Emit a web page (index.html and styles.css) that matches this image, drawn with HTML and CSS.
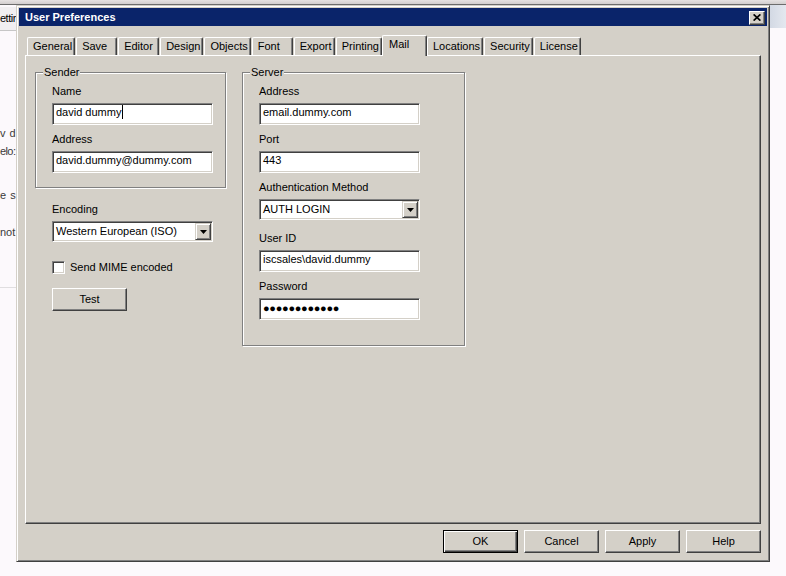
FILE: index.html
```html
<!DOCTYPE html>
<html>
<head>
<meta charset="utf-8">
<title>User Preferences</title>
<link rel="stylesheet" href="styles.css">
</head>
<body>
<div class="desk">
  <div class="topstrip"></div>
  <div class="desk-row">
    <div class="side-left">
      <div class="side-tab">ettir</div>
      <div class="side-line first">v d</div>
      <div class="side-line tight">elo:</div>
      <div class="side-line gap1">e s</div>
      <div class="side-line gap2">not</div>
      <div class="side-rule"></div>
    </div>
    <div class="side-right">
      <div class="pale"></div>
    </div>
  </div>
</div>

<div class="dialog">
  <div class="titlebar">
    <span class="title">User Preferences</span>
    <span class="close"><svg width="8" height="7" viewBox="0 0 8 7"><path d="M0.6 0.4L7.4 6.6M7.4 0.4L0.6 6.6" stroke="#000" stroke-width="1.7" fill="none"/></svg></span>
  </div>
  <div class="dlg-body">
    <div class="tabs">
      <div class="tab">General</div>
      <div class="tab">Save</div>
      <div class="tab">Editor</div>
      <div class="tab">Design</div>
      <div class="tab">Objects</div>
      <div class="tab">Font</div>
      <div class="tab">Export</div>
      <div class="tab">Printing</div>
      <div class="tab active">Mail</div>
      <div class="tab">Locations</div>
      <div class="tab">Security</div>
      <div class="tab">License</div>
    </div>
    <div class="panel">
      <div class="leftcol">
        <div class="group sender">
          <div class="group-title">Sender</div>
          <div class="field">
            <div class="lbl">Name</div>
            <div class="textbox">david dummy<span class="caret"></span></div>
          </div>
          <div class="field">
            <div class="lbl">Address</div>
            <div class="textbox">david.dummy@dummy.com</div>
          </div>
        </div>
        <div class="below">
          <div class="field">
            <div class="lbl">Encoding</div>
            <div class="combo">
              <span class="combo-text">Western European (ISO)</span>
              <span class="drop"><svg width="7" height="4" viewBox="0 0 7 4"><path d="M0 0H7L3.5 4Z" fill="#000"/></svg></span>
            </div>
          </div>
          <div class="checkrow"><span class="check"></span><span>Send MIME encoded</span></div>
          <div class="btn test">Test</div>
        </div>
      </div>
      <div class="group server">
        <div class="group-title">Server</div>
        <div class="field">
          <div class="lbl">Address</div>
          <div class="textbox">email.dummy.com</div>
        </div>
        <div class="field">
          <div class="lbl">Port</div>
          <div class="textbox">443</div>
        </div>
        <div class="field field-combo">
          <div class="lbl">Authentication Method</div>
          <div class="combo">
            <span class="combo-text">AUTH LOGIN</span>
            <span class="drop"><svg width="7" height="4" viewBox="0 0 7 4"><path d="M0 0H7L3.5 4Z" fill="#000"/></svg></span>
          </div>
        </div>
        <div class="field">
          <div class="lbl">User ID</div>
          <div class="textbox">iscsales\david.dummy</div>
        </div>
        <div class="field">
          <div class="lbl">Password</div>
          <div class="textbox pw">●●●●●●●●●●●●</div>
        </div>
      </div>
    </div>
    <div class="buttons">
      <div class="btn default">OK</div>
      <div class="btn">Cancel</div>
      <div class="btn">Apply</div>
      <div class="btn">Help</div>
    </div>
  </div>
</div>
</body>
</html>
```

FILE: styles.css
```css
html, body {
  margin: 0;
  padding: 0;
}
body {
  width: 786px;
  height: 576px;
  overflow: hidden;
  position: relative;
  background: #fcf9fc;
  font-family: "Liberation Sans", Arial, sans-serif;
  font-size: 11px;
}

/* background window behind the dialog */
.desk {
  height: 100%;
  display: flex;
  flex-direction: column;
}
.topstrip {
  height: 4px;
  flex: none;
  background: linear-gradient(#e6e2e2, #d2cece);
  border-bottom: 1px solid #6c6c6c;
}
.desk-row {
  flex: 1;
  display: flex;
  justify-content: space-between;
}
.side-left {
  width: 16px;
  white-space: nowrap;
  font-family: "Liberation Sans", Arial, sans-serif;
  font-size: 11px;
  color: #3a3a3a;
}
.side-tab {
  margin-top: 2px;
  height: 23px;
  line-height: 23px;
  background: #f1eff1;
  border-bottom: 1px solid #c6c6c6;
  font-size: 11px;
  letter-spacing: -0.5px;
  color: #000;
}
.side-line {
  line-height: 18px;
  word-spacing: 1px;
}
.side-line.tight { letter-spacing: -0.6px; }
.side-line.first { margin-top: 93px; }
.side-line.gap1 { margin-top: 26px; }
.side-line.gap2 { margin-top: 19px; }
.side-rule {
  margin-top: 46px;
  height: 1px;
  background: #e0dee0;
}
.side-right {
  width: 16px;
}
.pale {
  height: 23px;
  background: linear-gradient(to right, #d3d9e4, #e4e8ef);
}

/* dialog window */
.dialog {
  position: absolute;
  left: 16px;
  top: 5px;
  width: 754px;
  height: 557px;
  box-sizing: border-box;
  padding: 2px;
  background: #d4d0c8;
  border: 1px solid;
  border-color: #d4d0c8 #404040 #404040 #d4d0c8;
  box-shadow: inset 1px 1px #fff, inset -1px -1px #808080;
  display: flex;
  flex-direction: column;
  color: #000;
}
.titlebar {
  height: 18px;
  flex: none;
  background: #0a246a;
  color: #fff;
  display: flex;
  align-items: center;
  justify-content: space-between;
  padding: 0 2px 0 6px;
}
.title {
  font-weight: bold;
  line-height: 13px;
}
.close {
  width: 16px;
  height: 14px;
  margin-top: 1px;
  box-sizing: border-box;
  background: #d4d0c8;
  border: 1px solid;
  border-color: #fff #404040 #404040 #fff;
  box-shadow: inset -1px -1px #808080;
  display: flex;
  align-items: center;
  justify-content: center;
}
.close svg { display: block; }

.dlg-body {
  flex: 1;
  min-height: 0;
  display: flex;
  flex-direction: column;
  padding: 9px 6px 6px;
}

/* tabs */
.tabs {
  flex: none;
  height: 20px;
  display: flex;
  align-items: flex-end;
  gap: 1px;
  padding-left: 2px;
  position: relative;
  z-index: 1;
}
.tab {
  height: 18px;
  min-width: 41px;
  box-sizing: border-box;
  padding: 2px 2px 0 5px;
  line-height: 13px;
  white-space: nowrap;
  background: #d4d0c8;
  border: 1px solid;
  border-bottom: none;
  border-color: #fff #404040 #fff #fff;
  border-radius: 2px 2px 0 0;
  box-shadow: inset -1px 0 #808080;
}
.tab.active {
  height: 21px;
  min-width: 45px;
  margin: 0 -1px -1px;
  padding-left: 6px;
  position: relative;
  z-index: 2;
}

/* panel */
.panel {
  flex: 1;
  min-height: 0;
  border: 1px solid;
  border-color: #fff #404040 #404040 #fff;
  box-shadow: inset -1px -1px #808080;
  padding: 16px 0 0 9px;
  display: flex;
  align-items: flex-start;
  gap: 16px;
}
.group {
  box-sizing: border-box;
  border: 1px solid #808080;
  box-shadow: 1px 1px #fff, inset 1px 1px #fff;
  padding: 0 0 14px 16px;
}
.sender { width: 191px; }
.server { width: 223px; padding-bottom: 25px; }
.group-title {
  display: table;
  margin: -7px 0 0 -9px;
  padding: 0 1px;
  line-height: 13px;
  background: #d4d0c8;
}
.field { margin-top: 8px; }
.group-title + .field { margin-top: 6px; }
.field-combo + .field { margin-top: 12px; }
.lbl {
  line-height: 13px;
  margin-bottom: 5px;
  white-space: nowrap;
}
.textbox {
  width: 161px;
  height: 22px;
  box-sizing: border-box;
  background: #fff;
  border: 1px solid;
  border-color: #808080 #fff #fff #808080;
  box-shadow: inset 1px 1px #404040, inset -1px -1px #d4d0c8;
  padding: 0 3px;
  line-height: 17px;
  white-space: nowrap;
  overflow: hidden;
}
.caret {
  display: inline-block;
  width: 1px;
  height: 14px;
  margin-left: 1px;
  background: #000;
  vertical-align: -3px;
}
.pw {
  letter-spacing: -0.3px;
  line-height: 19px;
}
.combo {
  width: 161px;
  height: 21px;
  box-sizing: border-box;
  background: #fff;
  border: 1px solid;
  border-color: #808080 #fff #fff #808080;
  box-shadow: inset 1px 1px #404040, inset -1px -1px #d4d0c8;
  padding: 1px;
  display: flex;
  align-items: center;
}
.combo-text {
  flex: 1;
  padding-left: 2px;
  line-height: 17px;
  white-space: nowrap;
}
.drop {
  width: 16px;
  height: 17px;
  box-sizing: border-box;
  background: #d4d0c8;
  border: 1px solid;
  border-color: #d4d0c8 #404040 #404040 #d4d0c8;
  box-shadow: inset 1px 1px #fff, inset -1px -1px #808080;
  display: flex;
  align-items: center;
  justify-content: center;
}
.drop svg { display: block; }

.below { padding-left: 17px; }
.below > .field { margin-top: 15px; }
.checkrow {
  margin-top: 19px;
  display: flex;
  align-items: center;
  line-height: 13px;
  white-space: nowrap;
}
.check {
  width: 13px;
  height: 13px;
  box-sizing: border-box;
  margin-right: 5px;
  background: #fff;
  border: 1px solid;
  border-color: #808080 #fff #fff #808080;
  box-shadow: inset 1px 1px #404040, inset -1px -1px #d4d0c8;
}

/* buttons */
.btn {
  width: 75px;
  height: 23px;
  box-sizing: border-box;
  background: #d4d0c8;
  border: 1px solid;
  border-color: #fff #404040 #404040 #fff;
  box-shadow: inset -1px -1px #808080;
  display: flex;
  align-items: center;
  justify-content: center;
  line-height: 13px;
}
.btn.default {
  border-color: #000;
  box-shadow: inset 1px 1px #fff, inset -1px -1px #404040, inset -2px -2px #808080;
}
.test { margin-top: 14px; }
.buttons {
  flex: none;
  display: flex;
  justify-content: flex-end;
  gap: 6px;
  margin-top: 6px;
}
```
